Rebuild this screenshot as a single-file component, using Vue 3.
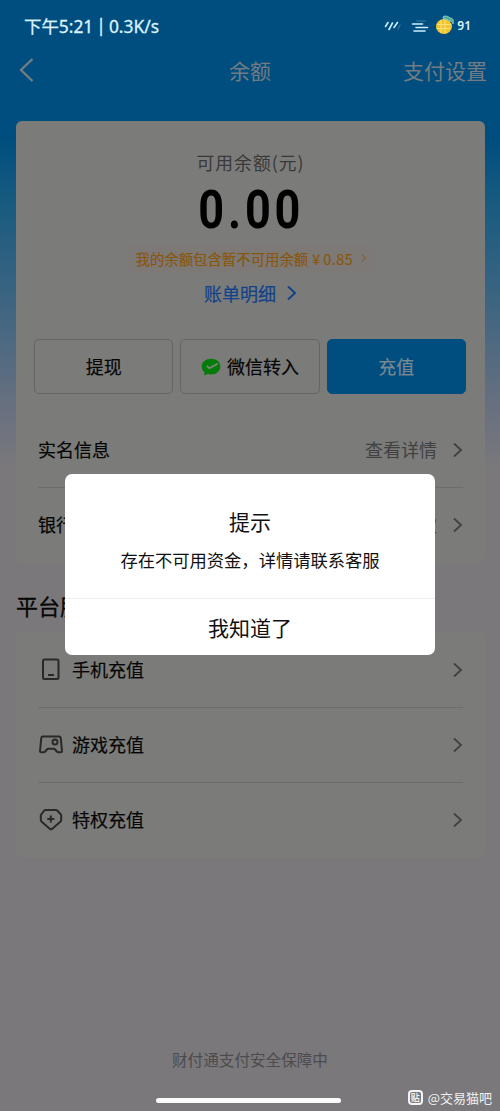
<script setup>
const services = [
  { name: '手机充值', icon: 'phone' },
  { name: '游戏充值', icon: 'game' },
  { name: '特权充值', icon: 'badge' },
]
</script>

<template>
  <div class="screen">
    <header class="status">
      <span class="clock">下午5:21<i>|</i>0.3K/s</span>
      <span class="indicators">
        <svg class="slashes" width="18" height="12" viewBox="0 0 18 12"><path d="M1.500 6.500 4 2.500M5 9.500 8.500 3M10 7.500 13.500 2.500" /><path class="faint" d="M14 9l2-4" /></svg>
        <svg class="bars" width="18" height="14" viewBox="0 0 18 14"><path class="faint" d="M6 1h8" /><path d="M1.500 4h10M5 7.500h11.500M3 11h11" /></svg>
        <svg class="fruit" width="21" height="20" viewBox="0 0 21 20">
          <ellipse cx="9" cy="11.500" rx="8" ry="7.500" fill="#f0c42f" />
          <path d="M2.500 9.500h13M2 13.500h13M6 5.500v12M10 5v13" stroke="#fbe27a" stroke-width="1" />
          <path d="M9 4c-2-1-1-3 1-3 3 0 4 1 5 2 3 0 4 2 3 6-1-3-2-3-4-3-1-2-3-2-5-2z" fill="#4fae9c" stroke="#a5dcd0" stroke-width=".7" />
        </svg>
        <b>91</b>
      </span>
    </header>

    <nav class="nav">
      <svg class="back" width="16" height="26" viewBox="0 0 16 26"><path d="M13.500 2 2 13l11.500 11" /></svg>
      <span class="nav-title">余额</span>
      <span class="settings">支付设置</span>
    </nav>

    <main>
      <section class="card balance">
        <div class="label">可用余额(元)</div>
        <div class="amount"><span>0.00</span></div>
        <div class="notice">我的余额包含暂不可用余额<span class="money">¥<em>0.85</em></span>
          <svg width="6" height="10" viewBox="0 0 6 10"><path d="m1 1.500 3.500 3.500L1 8.500" /></svg>
        </div>
        <div class="bill">账单明细<svg width="11" height="16" viewBox="0 0 11 16"><path d="m2 1.500 7 6.500-7 6.500" /></svg></div>
        <div class="actions">
          <div class="btn"><span>提现</span></div>
          <div class="btn">
            <svg class="wechat" width="20" height="18" viewBox="0 0 20 18"><path d="M10 .8C4.700.8.700 4.100.7 8.500c0 2.500 1.300 4.600 2.900 6l-.7 3 3.500-1.500c1.100.3 2.400.5 3.600.5 5.300 0 9.300-3.300 9.300-8S15.300.8 10 .8z" fill="#057b0b" /><path d="m5.800 7.800 2.600 2.500 8.200-4.600" fill="none" stroke="#7b8a79" stroke-width="1.700" /></svg>
            <span>微信转入</span>
          </div>
          <div class="btn primary"><span>充值</span></div>
        </div>
        <div class="row first">
          <span>实名信息</span>
          <span class="detail">查看详情</span>
          <svg class="chev" width="11" height="16" viewBox="0 0 11 16"><path d="m2 1.500 7 6.500-7 6.500" /></svg>
        </div>
        <div class="row">
          <span>银行卡</span>
          <span class="detail">去绑定</span>
          <svg class="chev" width="11" height="16" viewBox="0 0 11 16"><path d="m2 1.500 7 6.500-7 6.500" /></svg>
        </div>
      </section>

      <h2>平台服务</h2>

      <section class="card services">
        <div v-for="s in services" :key="s.name" class="row">
          <svg class="ico" width="26" height="24" viewBox="0 0 26 24">
            <template v-if="s.icon === 'phone'">
              <rect x="5" y="1.500" width="15.500" height="19.500" rx="1.500" /><path d="M10 17h6" />
            </template>
            <template v-else-if="s.icon === 'game'">
              <path d="M4.700 3.500h16.600q1.200 0 1.400 1.300L24 18q.1 1.200-1.100 1.200h-2.700q-.8 0-1.400-.7l-1.700-2q-.6-.7-1.500-.7h-5.200q-.9 0-1.500.7l-1.700 2q-.6.7-1.400.7H3.100q-1.200 0-1.100-1.200L3.300 4.800Q3.500 3.500 4.700 3.500z" /><circle cx="17" cy="9" r="2.500" />
            </template>
            <template v-else>
              <path d="M7.500 2h10.500q.7 0 1.200.5l3.500 3.800q.5.600.5 1.200v4.500q0 .8-.6 1.400l-8.600 7.600q-1 .8-2 0l-8.600-7.600q-.6-.6-.6-1.400V7.500q0-.6.5-1.200L6.300 2.500q.5-.5 1.200-.5z" /><path d="M12.800 7.500v7M9.300 11h7" />
            </template>
          </svg>
          <span>{{ s.name }}</span>
          <svg class="chev last" width="11" height="16" viewBox="0 0 11 16"><path d="m2 1.500 7 6.500-7 6.500" /></svg>
        </div>
      </section>
    </main>

    <footer>财付通支付安全保障中</footer>

    <div class="home-bar"></div>
    <div class="watermark"><span class="logo">贴</span>@交易猫吧</div>

    <div class="modal">
      <div class="modal-title">提示</div>
      <p>存在不可用资金，详情请联系客服</p>
      <div class="modal-ok">我知道了</div>
    </div>
  </div>
</template>

<style>
body {
  margin: 0;
}
</style>

<style scoped>
* {
  box-sizing: border-box;
}
.screen {
  position: relative;
  display: flex;
  flex-direction: column;
  width: 500px;
  height: 1111px;
  overflow: hidden;
  font-family: "Noto Sans CJK SC", sans-serif;
  font-size: 18px;
  color: #060606;
  background: linear-gradient(180deg, #004e7f 0, #004e7f 140px, #175a80 200px, #3c6581 300px, #666f80 400px, #7a787b 470px);
}
svg {
  fill: none;
  flex: none;
}
.status {
  display: flex;
  justify-content: space-between;
  align-items: center;
  height: 42px;
  padding: 10px 29px 0 24px;
  color: #dcf3ff;
}
.clock {
  display: flex;
  font-family: "Noto Sans", "Noto Sans CJK SC", sans-serif;
  font-size: 17.4px;
  line-height: 32px;
  white-space: nowrap;
  -webkit-text-stroke: 0.3px #dcf3ff;
}
.clock i {
  font-style: normal;
  margin: -1px 3px 0 3px;
}
.indicators {
  display: flex;
  align-items: center;
  height: 32px;
}
.indicators path {
  stroke-linecap: round;
}
.slashes, .bars {
  stroke: #c9f1ff;
  stroke-width: 1.6;
}
.slashes {
  margin-right: 9px;
}
.bars {
  margin: 2px 6px 0 0;
}
.faint {
  opacity: 0.2;
}
.fruit {
  margin-top: -3px;
}
.indicators b {
  margin: -2px 0 0 1px;
  font: 600 12px "Noto Sans", sans-serif;
}
.nav {
  display: grid;
  grid-template-columns: 1fr auto 1fr;
  align-items: center;
  height: 57px;
  padding: 0 13px 0 19px;
  font-size: 21px;
  line-height: 30px;
  color: #737c83;
}
.nav-title {
  margin: -1px 0 0 -6px;
}
.settings {
  justify-self: end;
  margin-top: -1px;
}
.back {
  margin-top: -2px;
  stroke: #737c83;
  stroke-width: 2.4;
}
main {
  padding: 22px 15px 0 16px;
}
.card {
  border-radius: 6px;
  background: #7b7b79;
}
.balance {
  display: flex;
  flex-direction: column;
  height: 442px;
}
.label {
  margin-top: 28px;
  text-align: center;
  font-size: 17.8px;
  line-height: 26px;
  letter-spacing: 1px;
  color: #393939;
}
.amount {
  height: 66px;
  text-align: center;
  font: 700 53px/70px Roboto, sans-serif;
  letter-spacing: 4.500px;
  color: #000;
}
.amount span {
  display: inline-block;
  margin-left: 2px;
  transform: scaleX(0.85);
}
.notice {
  display: flex;
  align-items: center;
  align-self: center;
  width: 246px;
  height: 27px;
  margin-top: 4px;
  padding: 0 0 1px 8px;
  border-radius: 2px;
  background: #7d7976;
  font-size: 14.4px;
  color: #8a560c;
  white-space: nowrap;
  -webkit-text-stroke: 0.15px;
}
.money {
  display: flex;
  width: 46px;
  margin-left: 4px;
}
.money em {
  font-style: normal;
  margin-left: 3px;
  letter-spacing: 0.5px;
}
.notice svg {
  margin-left: 3px;
  stroke: #8a560c;
}
.bill {
  display: flex;
  align-items: center;
  align-self: center;
  height: 32px;
  margin-top: 5px;
  gap: 10px;
  color: #12428b;
  -webkit-text-stroke: 0.2px #12428b;
}
.bill svg {
  stroke: #12428b;
  stroke-width: 1.9;
}
.actions {
  display: grid;
  grid-template-columns: repeat(3, 1fr);
  gap: 7px;
  margin: 30px 19px 0 18px;
}
.btn {
  display: flex;
  align-items: center;
  justify-content: center;
  height: 55px;
  border: 1px solid #656563;
  border-radius: 5px;
  -webkit-text-stroke: 0.2px;
}
.btn span {
  margin-top: -1px;
}
.wechat {
  margin-right: 6px;
}
.primary {
  border-color: #004e7f;
  background: #004e7f;
  color: #7c8890;
}
.row {
  display: flex;
  align-items: center;
  height: 75px;
  margin: 0 22px;
  line-height: 26px;
  -webkit-text-stroke: 0.2px;
}
.row span {
  margin-top: -2px;
}
.row + .row {
  border-top: 1px solid #6c6c6a;
}
.first {
  margin-top: 18px;
}
.row .detail {
  margin-left: auto;
  color: #414141;
  -webkit-text-stroke: 0;
}
.chev {
  margin-left: 15px;
  stroke: #414141;
  stroke-width: 1.8;
}
.chev.last {
  margin-left: auto;
}
h2 {
  margin: 24px 0 0;
  font-size: 22px;
  font-weight: 400;
  line-height: 36px;
  -webkit-text-stroke: 0.3px;
}
.services {
  height: 226px;
  margin-top: 9px;
}
.ico {
  margin-right: 8px;
  stroke: #292929;
  stroke-width: 2;
  stroke-linejoin: round;
}
footer {
  margin-top: 189px;
  text-align: center;
  font-size: 15.6px;
  line-height: 24px;
  color: #4c4b4d;
}
.home-bar {
  position: absolute;
  left: 156px;
  top: 1098px;
  width: 185px;
  height: 5px;
  border-radius: 3px;
  background: #fbfbfb;
}
.watermark {
  position: absolute;
  right: 8px;
  top: 1087px;
  display: flex;
  align-items: center;
  height: 21px;
  font-size: 13px;
  color: #f2f2f2;
}
.logo {
  display: flex;
  align-items: center;
  justify-content: center;
  width: 15px;
  height: 15px;
  margin-right: 5px;
  border: 2px solid #f4f4f4;
  border-radius: 4px;
  font-size: 9px;
  font-weight: 700;
}
.modal {
  position: absolute;
  left: 65px;
  top: 474px;
  width: 370px;
  height: 181px;
  border-radius: 7px;
  background: #fff;
  text-align: center;
  color: #111;
}
.modal-title {
  margin-top: 32px;
  font-size: 21px;
  line-height: 30px;
}
.modal p {
  margin: 11px 0 0;
  font-size: 17.3px;
  line-height: 26px;
}
.modal-ok {
  margin-top: 25px;
  border-top: 1px solid #eee;
  font-size: 21px;
  line-height: 56px;
}
</style>
